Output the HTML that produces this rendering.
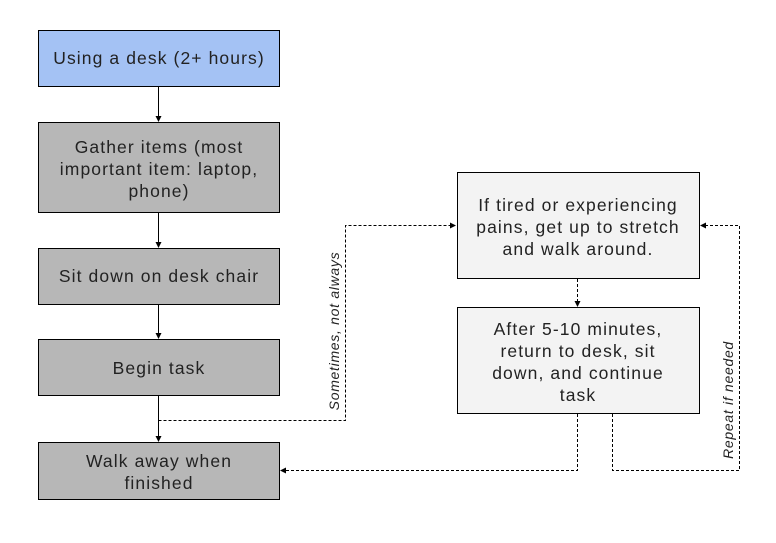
<!DOCTYPE html>
<html><head><style>body{margin:0;background:#fff}svg{display:block}text{font-family:"Liberation Sans",sans-serif;fill:#222}</style></head><body>
<svg width="776" height="543" viewBox="0 0 776 543" xmlns="http://www.w3.org/2000/svg">
<defs><marker id="a" markerWidth="6" markerHeight="6" refX="5" refY="3" orient="auto" markerUnits="userSpaceOnUse"><path d="M0,0 L6,3 L0,6z" fill="#000"/></marker></defs>
<g stroke="#000" stroke-width="1">
<rect x="38.5" y="30.5" width="241" height="56" fill="#a4c2f4"/>
<rect x="38.5" y="122.5" width="241" height="90" fill="#b7b7b7"/>
<rect x="38.5" y="248.5" width="241" height="56" fill="#b7b7b7"/>
<rect x="38.5" y="339.5" width="241" height="56" fill="#b7b7b7"/>
<rect x="38.5" y="442.5" width="241" height="57" fill="#b7b7b7"/>
<rect x="457.5" y="172.5" width="242" height="106" fill="#f3f3f3"/>
<rect x="457.5" y="307.5" width="242" height="106" fill="#f3f3f3"/>
<g fill="none" marker-end="url(#a)">
<path d="M158.5 87V121"/><path d="M158.5 213V247"/><path d="M158.5 305V338"/><path d="M158.5 396V441"/>
</g>
<g fill="none" stroke-dasharray="3,2">
<path d="M158.5 420.5H345.5V225.5H455" marker-end="url(#a)"/>
<path d="M577.5 279V306" marker-end="url(#a)"/>
<path d="M577.5 414V470.5H281" marker-end="url(#a)"/>
<path d="M612.5 414V470.5H739.5V225.5H701" marker-end="url(#a)"/>
</g>
</g>
<g font-size="17.5" letter-spacing="1.1" text-anchor="middle">
<text x="159" y="64">Using a desk (2+ hours)</text>
<text x="159" y="153">Gather items (most</text>
<text x="159" y="175">important item: laptop,</text>
<text x="159" y="197">phone)</text>
<text x="159" y="282">Sit down on desk chair</text>
<text x="159" y="374">Begin task</text>
<text x="159" y="467">Walk away when</text>
<text x="159" y="489">finished</text>
<text x="578" y="211">If tired or experiencing</text>
<text x="578" y="233">pains, get up to stretch</text>
<text x="578" y="255">and walk around.</text>
<text x="578" y="335">After 5-10 minutes,</text>
<text x="578" y="357">return to desk, sit</text>
<text x="578" y="379">down, and continue</text>
<text x="578" y="401">task</text>
</g>
<g font-size="14" letter-spacing="0.7" font-style="italic" text-anchor="middle">
<text transform="translate(339,331) rotate(-90)">Sometimes, not always</text>
<text transform="translate(733,400) rotate(-90)">Repeat if needed</text>
</g>
</svg>
</body></html>
